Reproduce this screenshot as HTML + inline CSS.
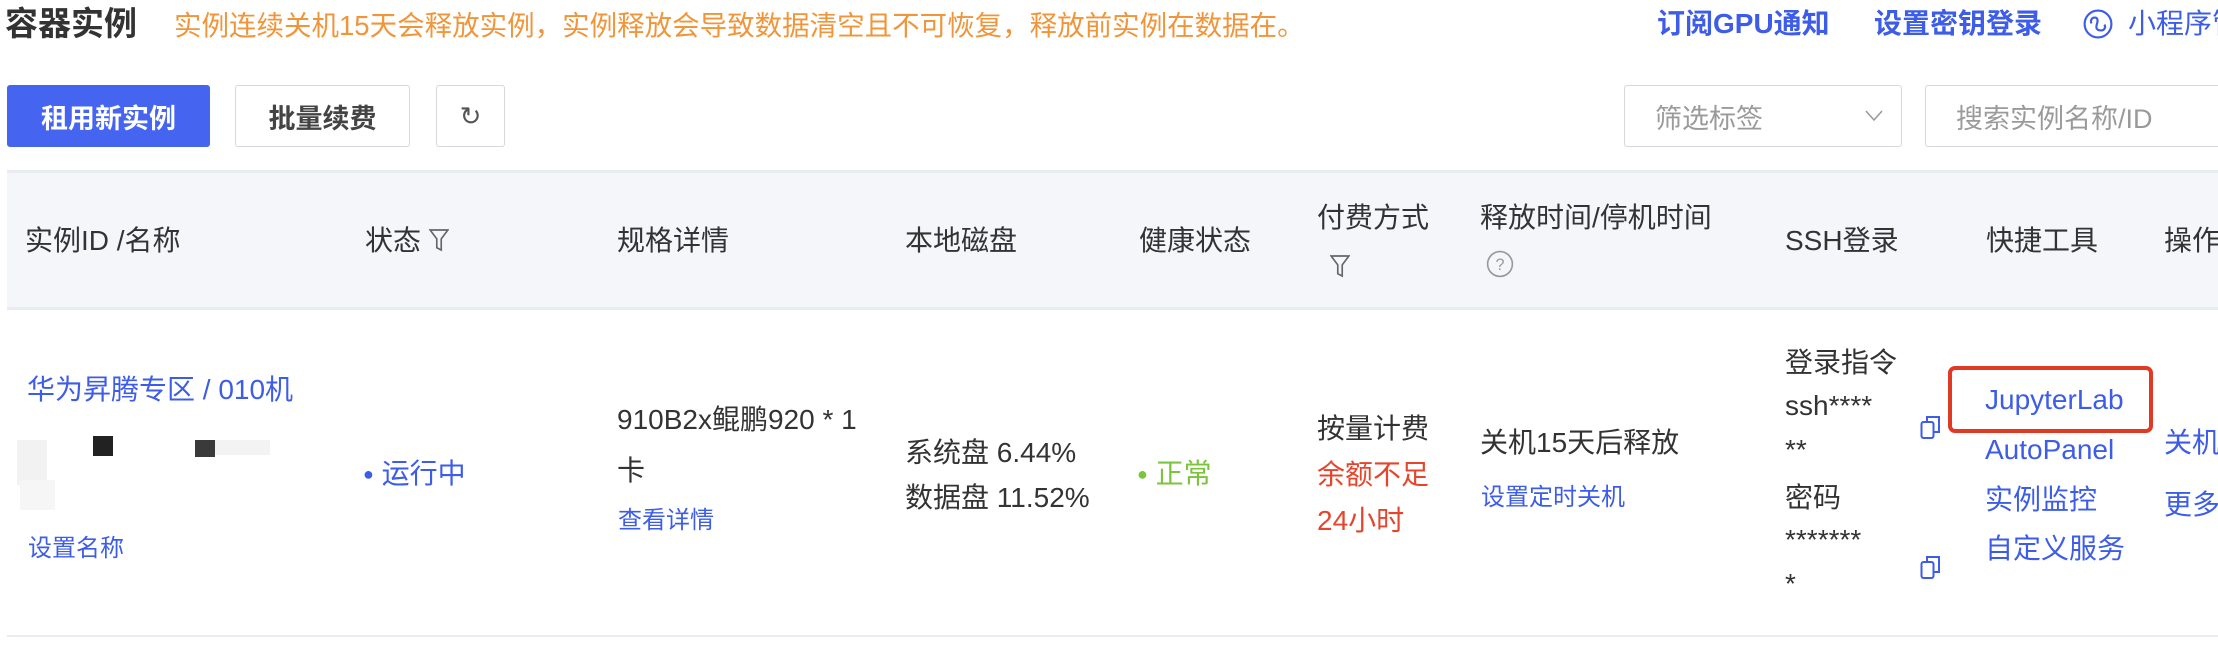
<!DOCTYPE html>
<html><head><meta charset="utf-8"><style>
*{margin:0;padding:0;box-sizing:border-box}
body{width:2218px;height:658px;background:#fff;position:relative;overflow:hidden;font-family:"Liberation Sans","Noto Sans CJK SC",sans-serif;color:#333;font-size:28px}
.a{position:absolute;white-space:nowrap;line-height:40px}
.b{color:#3d5ce8}
.sm{font-size:24px}
.btn{position:absolute;top:85px;height:62px;border:1.5px solid #d7d8dd;border-radius:3px;display:flex;align-items:center;justify-content:center;font-size:27px;font-weight:bold;color:#444}
</style></head><body>
<div class="a" style="left:5px;top:4px;font-size:33px;font-weight:bold">容器实例</div>
<div class="a" style="left:174px;top:6px;font-size:27.5px;color:#f0953a">实例连续关机15天会释放实例，实例释放会导致数据清空且不可恢复，释放前实例在数据在。</div>
<div class="a b" style="left:1657px;top:4px;font-size:28px;font-weight:bold">订阅GPU通知</div>
<div class="a b" style="left:1874px;top:4px;font-size:28px;font-weight:bold">设置密钥登录</div>
<svg style="position:absolute;left:2083px;top:9px" width="30" height="30" viewBox="0 0 28 28"><circle cx="14" cy="14" r="12.5" fill="none" stroke="#3d5ce8" stroke-width="2"/><path d="M11 8c-3 0-4.5 3-3 5.5M17 20c3 0 4.5-3 3-5.5M11 8c3 0 3 3 2 6s-1 6 4 6" fill="none" stroke="#3d5ce8" stroke-width="2"/></svg>
<div class="a b" style="left:2128px;top:4px;font-size:28px">小程序管</div>

<div class="btn" style="left:7px;width:203px;background:#4565f0;border-color:#4565f0;color:#fff">租用新实例</div>
<div class="btn" style="left:235px;width:175px">批量续费</div>
<div class="btn" style="left:436px;width:69px;font-weight:normal;font-size:26px;color:#555">&#x21bb;</div>
<div class="btn" style="left:1624px;width:278px;justify-content:space-between;padding:0 18px 0 30px;font-weight:normal;color:#9a9a9a">筛选标签<svg width="18" height="12" viewBox="0 0 18 12"><path d="M1 1l8 9 8-9" fill="none" stroke="#999" stroke-width="1.5"/></svg></div>
<div class="btn" style="left:1925px;width:320px;justify-content:flex-start;padding-left:30px;font-weight:normal;color:#9a9a9a">搜索实例名称/ID</div>

<div style="position:absolute;left:7px;top:170px;width:2211px;height:140px;background:#f5f6fa;border-top:3px solid #eaebf0;border-bottom:3px solid #eaebf0"></div>
<div class="a" style="left:25px;top:221px">实例ID /名称</div>
<div class="a" style="left:365px;top:221px">状态 <svg width="20" height="26" viewBox="0 0 18 22" style="vertical-align:-3px"><path d="M1 2h16l-6 8v10l-4-2v-8z" fill="none" stroke="#666" stroke-width="1.5"/></svg></div>
<div class="a" style="left:617px;top:221px">规格详情</div>
<div class="a" style="left:905px;top:221px">本地磁盘</div>
<div class="a" style="left:1139px;top:221px">健康状态</div>
<div class="a" style="left:1317px;top:198px">付费方式</div>
<svg style="position:absolute;left:1330px;top:253px" width="20" height="26" viewBox="0 0 18 22"><path d="M1 2h16l-6 8v10l-4-2v-8z" fill="none" stroke="#666" stroke-width="1.5"/></svg>
<div class="a" style="left:1480px;top:198px">释放时间/停机时间</div>
<svg style="position:absolute;left:1486px;top:250px" width="28" height="28" viewBox="0 0 26 26"><circle cx="13" cy="13" r="11.5" fill="none" stroke="#999" stroke-width="1.5"/><text x="13" y="18.5" font-size="15" text-anchor="middle" fill="#999" font-family="Liberation Sans">?</text></svg>
<div class="a" style="left:1785px;top:221px">SSH登录</div>
<div class="a" style="left:1986px;top:221px">快捷工具</div>
<div class="a" style="left:2164px;top:221px">操作</div>

<div class="a b" style="left:27px;top:370px">华为昇腾专区 / 010机</div>
<div style="position:absolute;left:17px;top:440px;width:30px;height:45px;background:#f2f2f2"></div>
<div style="position:absolute;left:93px;top:436px;width:20px;height:20px;background:#222"></div>
<div style="position:absolute;left:195px;top:440px;width:20px;height:17px;background:#3a3a3a"></div>
<div style="position:absolute;left:215px;top:440px;width:55px;height:15px;background:#f3f3f3"></div>
<div style="position:absolute;left:20px;top:480px;width:35px;height:30px;background:#f6f6f6"></div>
<div class="a b sm" style="left:28px;top:529px">设置名称</div>
<div class="a b" style="left:363px;top:454px"><span style="font-size:18px;vertical-align:3px">●</span> 运行中</div>
<div class="a" style="left:617px;top:400px">910B2x鲲鹏920 * 1</div>
<div class="a" style="left:617px;top:451px">卡</div>
<div class="a b sm" style="left:618px;top:501px">查看详情</div>
<div class="a" style="left:905px;top:433px">系统盘 6.44%</div>
<div class="a" style="left:905px;top:478px">数据盘 11.52%</div>
<div class="a" style="left:1137px;top:454px;color:#7cc43b"><span style="font-size:18px;vertical-align:3px">●</span> 正常</div>
<div class="a" style="left:1317px;top:409px">按量计费</div>
<div class="a" style="left:1317px;top:455px;color:#e5452d">余额不足</div>
<div class="a" style="left:1317px;top:501px;color:#e5452d">24小时</div>
<div class="a" style="left:1480px;top:423px">关机15天后释放</div>
<div class="a b sm" style="left:1481px;top:478px">设置定时关机</div>
<div class="a" style="left:1785px;top:343px">登录指令</div>
<div class="a" style="left:1785px;top:386px">ssh****</div>
<div class="a" style="left:1785px;top:430px">**</div>
<div class="a" style="left:1785px;top:478px">密码</div>
<div class="a" style="left:1785px;top:520px">*******</div>
<div class="a" style="left:1785px;top:564px">*</div>
<svg style="position:absolute;left:1920px;top:414px" width="22" height="26" viewBox="0 0 22 26"><rect x="1.5" y="8" width="12" height="16" rx="2" fill="none" stroke="#3d5ce8" stroke-width="2"/><path d="M7 8V3h12v15h-5" fill="none" stroke="#3d5ce8" stroke-width="2"/></svg>
<svg style="position:absolute;left:1920px;top:554px" width="22" height="26" viewBox="0 0 22 26"><rect x="1.5" y="8" width="12" height="16" rx="2" fill="none" stroke="#3d5ce8" stroke-width="2"/><path d="M7 8V3h12v15h-5" fill="none" stroke="#3d5ce8" stroke-width="2"/></svg>
<div style="position:absolute;left:1948px;top:366px;width:205px;height:67px;border:4px solid #e03a25;border-radius:7px"></div>
<div class="a b" style="left:1985px;top:380px">JupyterLab</div>
<div class="a b" style="left:1985px;top:430px">AutoPanel</div>
<div class="a b" style="left:1985px;top:480px">实例监控</div>
<div class="a b" style="left:1985px;top:529px">自定义服务</div>
<div class="a b" style="left:2164px;top:423px">关机</div>
<div class="a b" style="left:2164px;top:485px">更多</div>
<div style="position:absolute;left:7px;top:635px;width:2211px;height:2px;background:#eaebf0"></div>
</body></html>
